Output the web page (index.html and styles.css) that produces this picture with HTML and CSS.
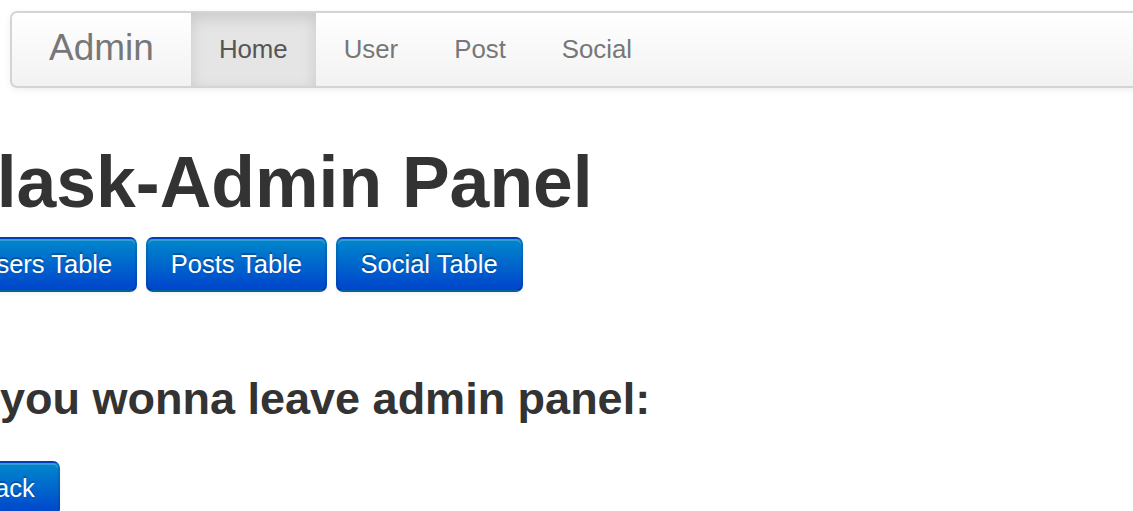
FILE: index.html
```html
<!DOCTYPE html>
<html lang="en">
<head>
<meta charset="utf-8">
<title>Flask-Admin Panel</title>
<link rel="stylesheet" href="styles.css">
</head>
<body>
  <div class="navbar">
    <a class="brand" href="#">Admin</a>
    <ul class="nav">
      <li class="active"><a href="#">Home</a></li>
      <li><a href="#">User</a></li>
      <li><a href="#">Post</a></li>
      <li><a href="#">Social</a></li>
    </ul>
  </div>

  <div class="container">
    <h1>Flask-Admin Panel</h1>
    <div class="actions">
      <a class="btn btn-primary" href="#">Users Table</a>
      <a class="btn btn-primary" href="#">Posts Table</a>
      <a class="btn btn-primary" href="#">Social Table</a>
    </div>

    <h3>If you wonna leave admin panel:</h3>
    <div class="actions">
      <a class="btn btn-primary" href="#">Back</a>
    </div>
  </div>
</body>
</html>
```

FILE: styles.css
```css
html, body {
  margin: 0;
  padding: 0;
  overflow: hidden;
  background: #ffffff;
}

body {
  font-family: "Liberation Sans", Arial, Helvetica, sans-serif;
  color: #333333;
}

a {
  text-decoration: none;
}

/* Top navigation bar */
.navbar {
  display: flex;
  align-items: stretch;
  height: 73px;
  margin: 11px -80px 0 10px;
  border: 2px solid #d4d4d4;
  border-radius: 7px;
  background: linear-gradient(to bottom, #ffffff, #f2f2f2);
  box-shadow: 0 2px 7px rgba(0, 0, 0, 0.065);
  overflow: hidden;
}

.brand {
  display: block;
  padding: 0 37px 0 37px;
  font-size: 37px;
  line-height: 70px;
  color: #777777;
}

.nav {
  display: flex;
  margin: 0;
  padding: 0;
  list-style: none;
}

.nav a {
  display: block;
  padding: 0 28px;
  font-size: 25.8px;
  line-height: 72px;
  color: #777777;
}

.nav .active a {
  height: 73px;
  color: #555555;
  background: #e5e5e5;
  box-shadow: inset 0 5px 15px rgba(0, 0, 0, 0.125);
}

/* Page body */
.container {
  margin-left: -47px;
}

h1 {
  margin: 57px 0 18px;
  font-size: 71.5px;
  line-height: 74px;
  font-weight: bold;
}

h3 {
  margin: 70px 0 25px;
  padding-left: 7px;
  font-size: 45px;
  line-height: 74px;
  font-weight: bold;
}

.actions {
  display: flex;
  gap: 8.5px;
}

.btn {
  display: inline-block;
  padding: 7px 23px;
  font-size: 25.5px;
  line-height: 37px;
  border: 2px solid;
  border-radius: 7px;
}

.btn-primary {
  color: #ffffff;
  text-shadow: 0 -2px 0 rgba(0, 0, 0, 0.25);
  background-color: #006dcc;
  background-image: linear-gradient(to bottom, #0088cc, #0044cc);
  border-color: rgba(0, 0, 0, 0.1) rgba(0, 0, 0, 0.1) rgba(0, 0, 0, 0.25);
  box-shadow: inset 0 2px 0 rgba(255, 255, 255, 0.2), 0 2px 4px rgba(0, 0, 0, 0.05);
}
```
